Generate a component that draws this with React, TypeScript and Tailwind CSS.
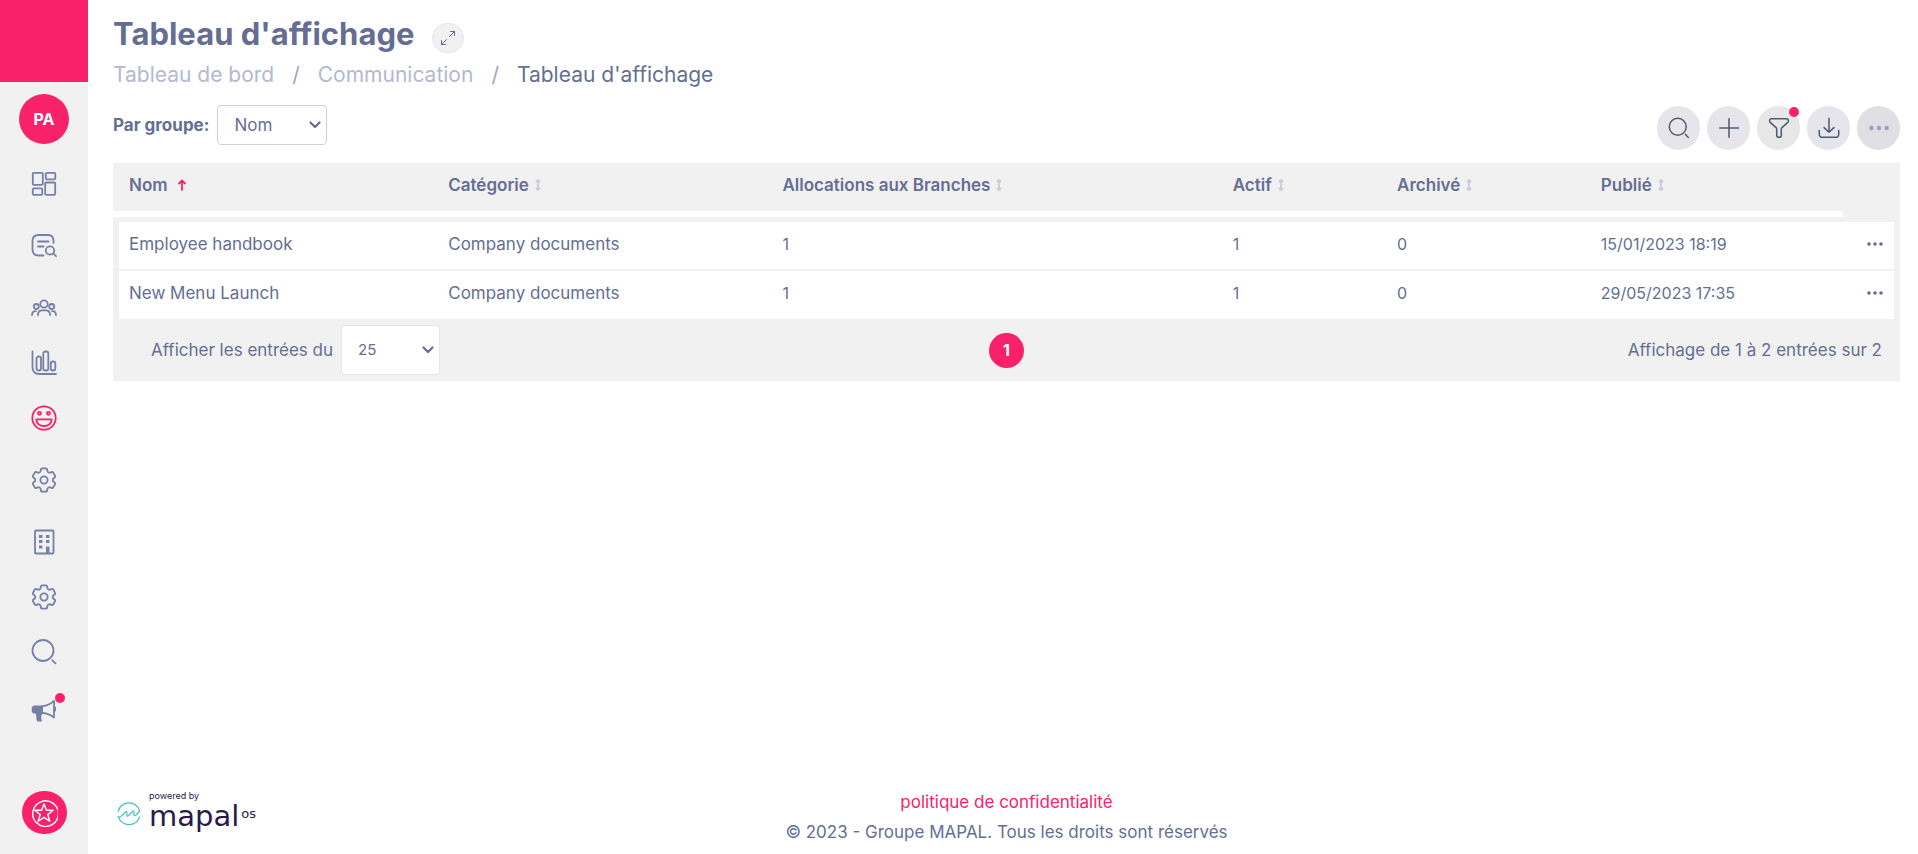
import { ReactNode, useState } from "react";
import clsx from "clsx";

interface IconProps {
  children: ReactNode;
  classes?: string;
  viewBox?: string;
}

function Icon({ children, classes, viewBox = "0 0 26 26" }: IconProps) {
  return (
    <svg
      viewBox={viewBox}
      className={clsx("block", classes ?? "size-[26px]")}
      fill="none"
      stroke="currentColor"
      strokeWidth="1.8"
      strokeLinecap="round"
      strokeLinejoin="round"
      aria-hidden="true"
    >
      {children}
    </svg>
  );
}

const gear = (
  <Icon viewBox="2 2 20 20">
    <g strokeWidth="1.4">
      <path d="M9.594 3.94c.09-.542.56-.94 1.11-.94h2.593c.55 0 1.02.398 1.11.94l.213 1.281c.063.374.313.686.645.87.074.04.147.083.22.127.325.196.72.257 1.075.124l1.217-.456a1.125 1.125 0 0 1 1.37.49l1.296 2.247a1.125 1.125 0 0 1-.26 1.431l-1.003.827c-.293.241-.438.613-.43.992a7.723 7.723 0 0 1 0 .255c-.008.378.137.75.43.991l1.004.827c.424.35.534.955.26 1.43l-1.298 2.247a1.125 1.125 0 0 1-1.369.491l-1.217-.456c-.355-.133-.75-.072-1.076.124a6.47 6.47 0 0 1-.22.128c-.331.183-.581.495-.644.869l-.213 1.281c-.09.543-.56.94-1.11.94h-2.594c-.55 0-1.019-.398-1.11-.94l-.213-1.281c-.062-.374-.312-.686-.644-.87a6.52 6.52 0 0 1-.22-.127c-.325-.196-.72-.257-1.076-.124l-1.217.456a1.125 1.125 0 0 1-1.369-.49l-1.297-2.247a1.125 1.125 0 0 1 .26-1.431l1.004-.827c.292-.24.437-.613.43-.991a6.932 6.932 0 0 1 0-.255c.007-.38-.138-.751-.43-.992l-1.004-.827a1.125 1.125 0 0 1-.26-1.43l1.297-2.247a1.125 1.125 0 0 1 1.37-.491l1.216.456c.356.133.751.072 1.076-.124.072-.044.146-.086.22-.128.332-.183.582-.495.644-.869l.214-1.28Z" />
      <circle cx="12" cy="12" r="2.8" />
    </g>
  </Icon>
);

const navItems = [
  {
    label: "Tableau de bord",
    margin: "mt-[27px]",
    icon: (
      <Icon>
        <rect x="1.8" y="1.8" width="10" height="12" rx="1" />
        <rect x="14.8" y="1.8" width="9.5" height="6.5" rx="1" />
        <rect x="1.8" y="17.3" width="9.5" height="6.5" rx="1" />
        <rect x="14.2" y="11.5" width="10" height="12.3" rx="1" />
      </Icon>
    ),
  },
  {
    label: "Recherche de documents",
    margin: "mt-9",
    icon: (
      <Icon>
        <path d="M12.5 22.5H7.5Q1.5 22.5 1.5 16.5V8Q1.5 2 7.5 2H17Q22.5 2 22.5 8v2" />
        <path d="M7 8.5h10.5M7 13.5h5.5" />
        <circle cx="19" cy="17.5" r="4.2" />
        <path d="m22.2 20.7 2.8 2.5" />
      </Icon>
    ),
  },
  {
    label: "Équipe",
    margin: "mt-9",
    icon: (
      <Icon>
        <circle cx="13" cy="9" r="3.7" />
        <circle cx="5.3" cy="11.5" r="2.5" />
        <circle cx="20.7" cy="11.5" r="2.5" />
        <path d="M7 20v-1Q7.500 15.300 11 15.300h4q3.500 0 4 3.700v1M1 20q0-3.800 3.800-3.800M25 20q0-3.800-3.800-3.800" />
      </Icon>
    ),
  },
  {
    label: "Rapports",
    margin: "mt-[29px]",
    icon: (
      <Icon>
        <path d="M1.5 1.5V17q0 7 7 7H25" />
        <rect x="5.5" y="6.5" width="4.5" height="14" rx="2" />
        <rect x="12.3" y="1.5" width="5" height="19" rx="2" />
        <rect x="19.8" y="11.5" width="4.5" height="9" rx="2" />
      </Icon>
    ),
  },
  {
    label: "Communication",
    margin: "mt-[29px]",
    active: true,
    icon: (
      <Icon>
        <circle cx="13" cy="13" r="11.7" />
        <circle cx="8.5" cy="8.3" r="1.5" />
        <circle cx="17.5" cy="8.3" r="1.5" />
        <path d="M5.3 14.300h15.400Q19.800 21 13 21T5.300 14.300z" />
      </Icon>
    ),
  },
  { label: "Paramètres", margin: "mt-9", icon: gear },
  {
    label: "Entreprise",
    margin: "mt-9",
    icon: (
      <Icon>
        <rect x="4" y="1.5" width="18.5" height="23" rx="1" />
        <path
          d="M8 6h3.400v3H8zM15 6h3.400v3H15zM8 11h3.400v3H8zM15 11h3.400v3H15zM8 16.500h3.400v3H8zM15 17.500h3.400V24H15z"
          fill="currentColor"
          stroke="none"
        />
      </Icon>
    ),
  },
  { label: "Configuration", margin: "mt-[29px]", icon: gear },
  {
    label: "Rechercher",
    margin: "mt-[29px]",
    icon: (
      <Icon>
        <circle cx="12" cy="11.5" r="10.5" />
        <path d="m21.3 21.3 3.2 3" />
      </Icon>
    ),
  },
  {
    label: "Annonces",
    margin: "mt-8",
    badge: true,
    icon: (
      <Icon>
        <path
          d="M12 8.500H3L.8 10v5l1.700 1.500h2q1 .5.700 3.500 0 3.500 1.300 4.500h4q1-.8 0-2-.8-1.800 0-4.500l1.500-1.500z"
          fill="currentColor"
          stroke="none"
        />
        <path d="M11.500 9.200q6.500-.8 11.500-5.400V20.500q-5-4-11.500-4.600" />
        <path d="M24 10.500v3" strokeWidth="2" />
      </Icon>
    ),
  },
];

function Sidebar() {
  return (
    <aside className="flex w-[88px] shrink-0 flex-col items-center bg-[#f1f1f1]">
      <div className="h-[82px] self-stretch bg-[#fa216b]" />
      <button
        type="button"
        className="mt-3 size-[50px] rounded-full bg-[#fa216b] text-base font-bold text-white"
      >
        PA
      </button>
      <nav className="flex flex-col items-center">
        {navItems.map(({ label, margin, icon, active, badge }) => (
          <a
            key={label}
            href="#"
            aria-label={label}
            className={clsx(
              "relative",
              margin,
              active ? "text-[#fa216b]" : "text-[#7680a6]"
            )}
          >
            {icon}
            {badge && (
              <span className="absolute -top-1 -right-2 size-2.5 rounded-full bg-[#fa216b]" />
            )}
          </a>
        ))}
      </nav>
      <button
        type="button"
        aria-label="Favoris"
        className="mt-auto mb-5 flex h-[43px] w-[45px] items-center justify-center rounded-full bg-[#fa216b] text-white"
      >
        <Icon classes="size-7">
          <path d="M6.200 22.200A11.900 11.900 0 1 1 9.200 24.300L6 21.800" strokeWidth="1.3" />
          <path
            d="m13 4.500 2.200 6h6.300l-5 4 1.900 6.200L13 17l-5.400 3.700 1.900-6.200-5-4h6.300z"
            strokeWidth="1.3"
          />
        </Icon>
      </button>
    </aside>
  );
}

interface ToolButtonProps {
  label: string;
  classes: string;
  badge?: boolean;
  children: ReactNode;
}

function ToolButton({ label, classes, badge, children }: ToolButtonProps) {
  return (
    <button
      type="button"
      aria-label={label}
      className={clsx(
        "relative flex h-11 w-[43px] items-center justify-center rounded-full",
        classes
      )}
    >
      {children}
      {badge && (
        <span className="absolute top-px right-px size-2.5 rounded-full bg-[#fa216b]" />
      )}
    </button>
  );
}

function Toolbar() {
  return (
    <div className="flex gap-[7px]">
      <ToolButton label="Rechercher" classes="bg-[#e6e5ec] text-[#4f5b76]">
        <Icon classes="size-[22px]">
          <circle cx="11.5" cy="11.5" r="10" />
          <path d="m20.5 20.5 3.5 3.7" />
        </Icon>
      </ToolButton>
      <ToolButton label="Ajouter" classes="bg-[#e6e5ec] text-[#4f5b76]">
        <Icon classes="size-[22px]">
          <path d="M13 2v22M2 13h22" />
        </Icon>
      </ToolButton>
      <ToolButton label="Filtrer" classes="bg-[#e7e7e7] text-[#4f5b76]" badge>
        <Icon classes="size-[22px]">
          <path d="M4 2h18q2.500.2 2 3-.3 1.200-1.300 2l-6.200 5.500q-.8.800-.8 2V22q-.2 2-2.700 2t-2.700-2v-7.500q0-1.200-.8-2L3.300 7Q2.300 6.200 2 5q-.5-2.800 2-3z" />
        </Icon>
      </ToolButton>
      <ToolButton label="Télécharger" classes="bg-[#e6e5ec] text-[#4f5b76]">
        <Icon classes="size-[22px]">
          <path d="M13 1.500V18M7.200 12.500 13 18l5.800-5.500M1.500 16v4q0 4 4 4h15q4 0 4-4v-4" />
        </Icon>
      </ToolButton>
      <ToolButton label="Plus" classes="bg-[#dfdfe4] text-[#9aa1bd]">
        <Icon classes="size-[22px]">
          <g fill="currentColor" stroke="none">
            <circle cx="4" cy="13" r="2.6" />
            <circle cx="13" cy="13" r="2.6" />
            <circle cx="22" cy="13" r="2.6" />
          </g>
        </Icon>
      </ToolButton>
    </div>
  );
}

function Chevron() {
  return (
    <Icon
      viewBox="0 0 12 8"
      classes="pointer-events-none absolute top-1/2 right-1.5 h-2 w-3 -translate-y-1/2"
    >
      <path d="m1.5 1.5 4.5 4.5 4.5-4.5" strokeWidth="2.2" />
    </Icon>
  );
}

const columns = [
  { label: "Nom", width: "w-[18.2%]" },
  { label: "Catégorie", width: "w-[18.7%]" },
  { label: "Allocations aux Branches", width: "w-[25.2%]" },
  { label: "Actif", width: "w-[9.2%]" },
  { label: "Archivé", width: "w-[11.4%]" },
  { label: "Publié", width: "" },
];

const rows = [
  ["Employee handbook", "Company documents", "1", "1", "0", "15/01/2023 18:19"],
  ["New Menu Launch", "Company documents", "1", "1", "0", "29/05/2023 17:35"],
];

function BoardTable() {
  return (
    <table className="w-full table-fixed border-separate border-spacing-0 bg-[#f1f1f1] text-left">
      <thead>
        <tr className="h-[54px]">
          {columns.map(({ label, width }, index) => (
            <th
              key={label}
              scope="col"
              className={clsx(
                "border-b-[6px] border-white pt-2.5 align-top font-semibold",
                index === 0 ? "pl-4" : "pl-2.5",
                width
              )}
            >
              <button type="button" className="flex items-center gap-1.5">
                {label}
                {index === 0 ? (
                  <Icon viewBox="0 0 8 12" classes="ml-1 h-3 w-2 text-[#fa216b]">
                    <path d="M4 11V1.500M1 4.500l3-3 3 3" />
                  </Icon>
                ) : (
                  <Icon viewBox="0 0 6 12" classes="h-3 w-1.5 text-[#cbccd9]">
                    <path d="M3 1v10M1.500 2.500 3 1l1.500 1.500M1.500 9.500 3 11l1.500-1.500" />
                  </Icon>
                )}
              </button>
            </th>
          ))}
          <th className="w-[57px]" aria-label="Actions" />
        </tr>
      </thead>
      <tbody>
        {rows.map((row, rowIndex) => {
          const edge =
            rowIndex === 0
              ? "h-[54px] border-t-[5px] border-b-2 pb-1"
              : "h-12 pb-1";
          return (
            <tr key={row[0]}>
              {row.map((value, index) => (
                <td
                  key={columns[index].label}
                  className={clsx(
                    "border-[#f1f1f1] bg-white pl-2.5",
                    index === 0 && "border-l-[6px]",
                    index > 1 && "text-base",
                    edge
                  )}
                >
                  {value}
                </td>
              ))}
              <td
                className={clsx("border-r-[6px] border-[#f1f1f1] bg-white", edge)}
              >
                <button
                  type="button"
                  aria-label={`Actions pour ${row[0]}`}
                  className="mx-auto block pl-3"
                >
                  <Icon viewBox="0 0 18 6" classes="h-1.5 w-[18px]">
                    <g fill="currentColor" stroke="none">
                      <circle cx="3" cy="3" r="1.8" />
                      <circle cx="9" cy="3" r="1.8" />
                      <circle cx="15" cy="3" r="1.8" />
                    </g>
                  </Icon>
                </button>
              </td>
            </tr>
          );
        })}
      </tbody>
    </table>
  );
}

function MapalLogo() {
  return (
    <div className="flex items-end gap-2 pt-1 pl-1 text-[#2b1a47]">
      <Icon viewBox="0 0 24 24" classes="mb-1.5 size-6 text-[#43bfc9]">
        <path
          d="M1.200 9.500A11 11 0 0 1 22.600 9M22.500 15A11 11 0 0 1 1.500 15M1 14.500q2 1.500 4-1l3.500-3.500q1.800-1 1.500 1.200-.8 4.300 1.500 2.300l4-4q1.700-1.200 1.500 1-.7 4.500 2 2.500l3.500-3.500"
          strokeWidth="1.2"
        />
      </Icon>
      <div>
        <div className="text-[9px] leading-[9px]">powered by</div>
        <div className="flex items-start gap-0.5 font-['DejaVu_Sans']">
          <span className="text-[29px] leading-8">mapal</span>
          <span className="pt-2 text-[13px] leading-3">os</span>
        </div>
      </div>
    </div>
  );
}

export default function App() {
  const [group, setGroup] = useState("Nom");
  const [pageSize, setPageSize] = useState("25");

  return (
    <div className="flex min-h-screen bg-white font-['Inter',sans-serif] text-[17px] leading-6 text-[#656e92]">
      <Sidebar />
      <main className="flex min-w-0 flex-1 flex-col pr-[18px] pl-[25px]">
        <header className="pt-3">
          <div className="flex items-center gap-[18px]">
            <h1 className="text-[31px] leading-[44px] font-bold">
              Tableau d'affichage
            </h1>
            <button
              type="button"
              aria-label="Plein écran"
              className="mt-2 flex h-[30px] w-8 items-center justify-center rounded-full border border-[#e6e5ec] bg-[#f1f1f1]"
            >
              <Icon viewBox="0 0 16 16" classes="size-4">
                <path
                  d="M10.500 1.500h4v4M14.500 1.500 9.500 6.500M5.500 14.500h-4v-4M1.500 14.500l5-5"
                  strokeWidth="1"
                />
              </Icon>
            </button>
          </div>
          <nav
            aria-label="Fil d'Ariane"
            className="mt-1 flex gap-[18px] text-[21px] leading-[30px] text-[#b4b8d0]"
          >
            <a href="#">Tableau de bord</a>
            <span className="text-[#a0a6c3]">/</span>
            <a href="#">Communication</a>
            <span className="text-[#a0a6c3]">/</span>
            <span className="text-[#656e92]">Tableau d'affichage</span>
          </nav>
        </header>

        <div className="mt-[15px] flex justify-between">
          <div className="flex h-10 items-center gap-2">
            <label htmlFor="group" className="font-bold">
              Par groupe:
            </label>
            <div className="relative">
              <select
                id="group"
                value={group}
                onChange={(e) => setGroup(e.target.value)}
                className="h-10 w-[110px] appearance-none rounded border border-[#ceced9] bg-white pl-4"
              >
                <option>Nom</option>
                <option>Catégorie</option>
              </select>
              <Chevron />
            </div>
          </div>
          <div className="pt-px">
            <Toolbar />
          </div>
        </div>

        <section className="mt-[13px] bg-[#f1f1f1]">
          <BoardTable />
          <div className="grid h-[62px] grid-cols-3 items-center">
            <div className="flex items-center gap-2 pl-[38px]">
              <label htmlFor="page-size">Afficher les entrées du</label>
              <div className="relative">
                <select
                  id="page-size"
                  value={pageSize}
                  onChange={(e) => setPageSize(e.target.value)}
                  className="block h-[50px] w-[99px] appearance-none rounded border border-[#e6e6e6] bg-white pl-4 text-[15px]"
                >
                  <option>25</option>
                  <option>50</option>
                  <option>100</option>
                </select>
                <Chevron />
              </div>
            </div>
            <button
              type="button"
              aria-current="page"
              className="h-[35px] w-[35px] justify-self-center rounded-full bg-[#fa216b] text-base font-bold text-white"
            >
              1
            </button>
            <p className="pr-[18px] text-right">Affichage de 1 à 2 entrées sur 2</p>
          </div>
        </section>

        <footer className="mt-auto grid grid-cols-3 items-start pb-[7px]">
          <MapalLogo />
          <div className="text-center leading-[30px] whitespace-nowrap">
            <a href="#" className="text-[#fa216b]">
              politique de confidentialité
            </a>
            <p>© 2023 - Groupe MAPAL. Tous les droits sont réservés</p>
          </div>
        </footer>
      </main>
    </div>
  );
}
